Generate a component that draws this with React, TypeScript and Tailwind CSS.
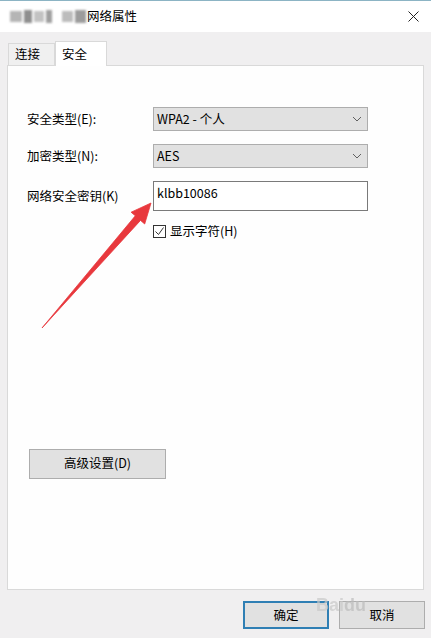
import React from 'react';

const font = { fontFamily: '"Microsoft YaHei UI", "Noto Sans CJK SC", "Noto Sans", sans-serif' };

function Chevron() {
  return (
    <svg width="10" height="6" viewBox="0 0 10 6" className="text-[#606060]">
      <path d="M1 1l4 4 4-4" fill="none" stroke="currentColor" strokeWidth="1" />
    </svg>
  );
}

function Select({ value }: { value: string }) {
  return (
    <div className="w-[215px] h-[24px] bg-[#e1e1e1] border border-[#adadad] flex items-center justify-between pl-[3px] pr-[5px] text-[12.5px] text-black">
      <span>{value}</span>
      <Chevron />
    </div>
  );
}

function Row({ label, children }: { label: string; children: React.ReactNode }) {
  return (
    <div className="flex items-center">
      <div className="w-[126px] text-[12.5px] text-black">{label}</div>
      {children}
    </div>
  );
}

export default function App() {
  return (
    <div className="w-[431px] h-[638px] flex flex-col bg-[#f0eff0] relative overflow-hidden" style={font}>
      {/* title bar */}
      <div className="h-[32px] bg-white border-t border-[#8cb4c4] flex items-center justify-between pl-[10px] pr-[12px]">
        <div className="flex items-center">
          <div className="flex items-center gap-[2px] blur-[1px] mr-[1px]">
            <div className="w-[12px] h-[11px] bg-[#b5b5b5]" />
            <div className="w-[8px] h-[13px] bg-[#8f8f8f]" />
            <div className="w-[10px] h-[11px] bg-[#c2c2c2]" />
            <div className="w-[6px] h-[13px] bg-[#9f9f9f]" />
            <div className="w-[6px] h-[4px]" />
            <div className="w-[11px] h-[11px] bg-[#bcbcbc]" />
            <div className="w-[11px] h-[13px] bg-[#9c9c9c]" />
          </div>
          <span className="text-[12.5px] text-black">网络属性</span>
        </div>
        <svg width="11" height="11" viewBox="0 0 11 11">
          <path d="M0.5 0.5l10 10M10.5 0.5l-10 10" stroke="#222" strokeWidth="1" />
        </svg>
      </div>

      {/* tabs + panel */}
      <div className="flex-1 flex flex-col px-[7px] pt-[8px]">
        <div className="flex items-end h-[25px] pl-[1px]">
          <div className="h-[22px] w-[47px] border border-b-0 border-[#d9d9d9] bg-[#f0f0f0] text-[12.5px] flex items-center pl-[6px]">
            连接
          </div>
          <div className="h-[25px] w-[52px] border border-b-0 border-[#d9d9d9] bg-white text-[12.5px] flex items-start pt-[3px] pl-[6px] -mb-px relative z-10">
            安全
          </div>
        </div>
        <div className="h-[525px] bg-[#fefefe] border border-[#d9d9d9] flex flex-col pl-[19px] pt-[41px]">
          <div className="flex flex-col gap-[13px]">
            <Row label="安全类型(E):">
              <Select value="WPA2 - 个人" />
            </Row>
            <Row label="加密类型(N):">
              <Select value="AES" />
            </Row>
            <Row label="网络安全密钥(K)">
              <div className="w-[215px] h-[30px] bg-white border border-[#7a7a7a] pl-[3px] pt-[3px] text-[12.5px] text-black leading-[16px]">
                klbb10086
              </div>
            </Row>
          </div>
          <div className="flex items-center gap-[4px] ml-[126px] mt-[11px]">
            <div className="w-[13px] h-[13px] border border-[#333] bg-white flex items-center justify-center">
              <svg width="11" height="11" viewBox="0 0 11 11">
                <path d="M1.5 5.5l3 3 5-7" fill="none" stroke="#333" strokeWidth="1" />
              </svg>
            </div>
            <span className="text-[12.5px] text-black">显示字符(H)</span>
          </div>
          <div className="mt-[208px] ml-[2px] w-[137px] h-[30px] bg-[#e1e1e1] border border-[#adadad] flex items-center justify-center text-[12.5px] text-black">
            高级设置(D)
          </div>
        </div>
        <div className="flex justify-end gap-[10px] mt-[11px]">
          <div className="w-[86px] h-[28px] bg-[#e1e1e1] border-2 border-[#2f7fb4] flex items-center justify-center text-[12.5px] text-black">
            确定
          </div>
          <div className="w-[86px] h-[28px] bg-[#e1e1e1] border border-[#adadad] flex items-center justify-center text-[12.5px] text-black -mr-[1px]">
            取消
          </div>
        </div>
      </div>

      {/* red annotation arrow */}
      <svg className="absolute left-0 top-0 pointer-events-none" width="431" height="638" viewBox="0 0 431 638">
        <path d="M42 328 L135.3 215.8 L131.1 212.2 L151 203 L144.7 224 L140.5 220.4 Z" fill="#e8383d" stroke="#e8383d" strokeWidth="0.8" strokeLinejoin="round" />
      </svg>

      {/* watermark */}
      <div className="absolute left-[316px] top-[592px] text-[#c9c9c9] text-[18px] font-bold opacity-70 pointer-events-none" style={{ fontFamily: 'Arial, "Liberation Sans", sans-serif' }}>
        Bai<span className="text-[#bcbcbc]">du</span>
      </div>
    </div>
  );
}
